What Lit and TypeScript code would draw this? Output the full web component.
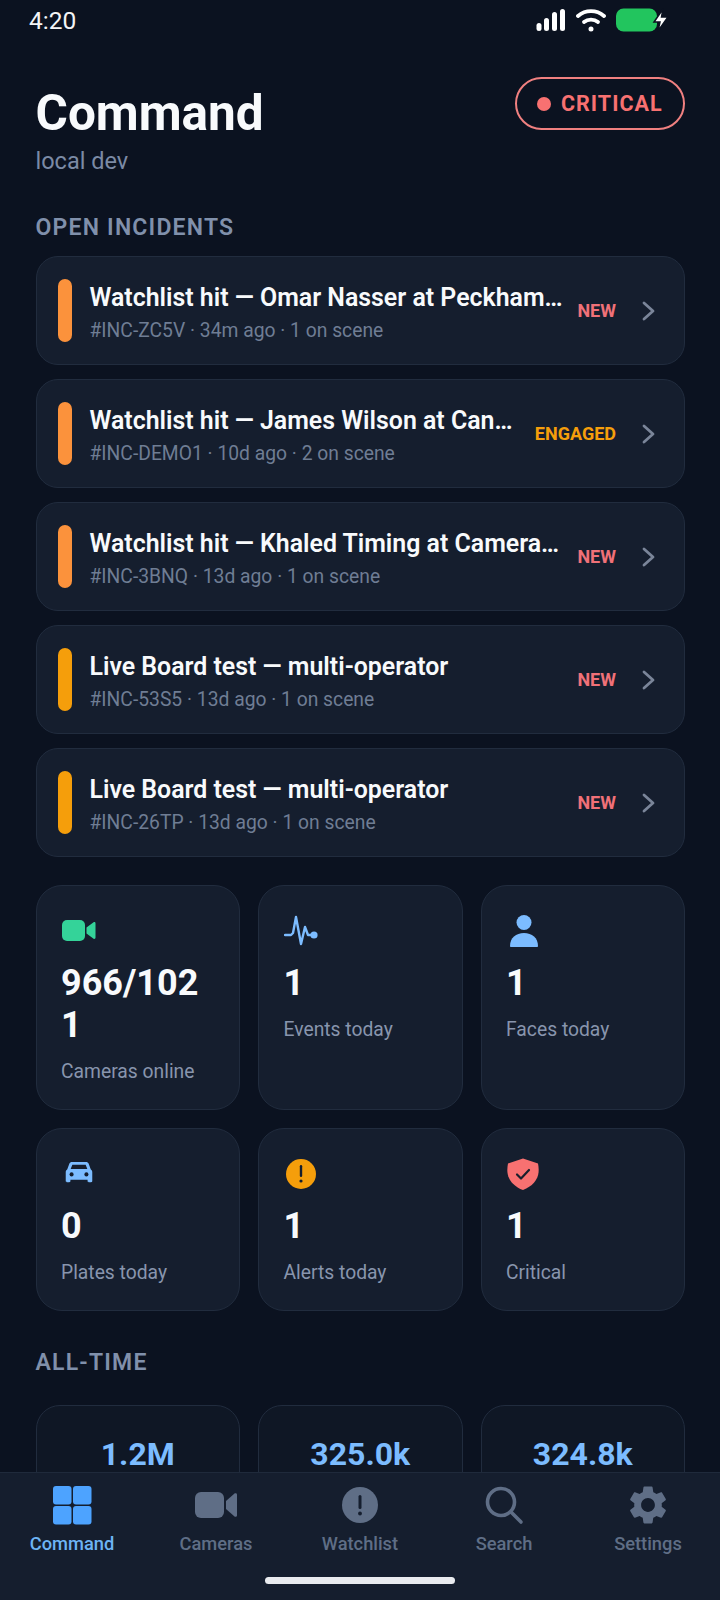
import { LitElement, html, css, svg } from 'lit';
import { customElement } from 'lit/decorators.js';

const incidents = [
  { title: 'Watchlist hit — Omar Nasser at Peckham…', sub: '#INC-ZC5V · 34m ago · 1 on scene', status: 'NEW', bar: '#fb923c' },
  { title: 'Watchlist hit — James Wilson at Can…', sub: '#INC-DEMO1 · 10d ago · 2 on scene', status: 'ENGAGED', bar: '#fb923c' },
  { title: 'Watchlist hit — Khaled Timing at Camera…', sub: '#INC-3BNQ · 13d ago · 1 on scene', status: 'NEW', bar: '#fb923c' },
  { title: 'Live Board test — multi-operator', sub: '#INC-53S5 · 13d ago · 1 on scene', status: 'NEW', bar: '#f59e0b' },
  { title: 'Live Board test — multi-operator', sub: '#INC-26TP · 13d ago · 1 on scene', status: 'NEW', bar: '#f59e0b' },
];

const icons = {
  video: svg`<svg width="36" height="32" viewBox="0 -3 36 32"><rect x="1" y="2" width="23" height="21" rx="5" fill="#34d399"/><path d="M25.500 9.500 32.600 4.300c.8-.6 1.900-.1 1.900.9v14.600c0 1-1.100 1.500-1.900.9L25.500 15.500z" fill="#34d399"/></svg>`,
  pulse: svg`<svg width="36" height="32" viewBox="0 0 36 32"><path d="M1 20h6l2-2L12 2l5 27 4-17 3 8h7" fill="none" stroke="#7cbcff" stroke-width="2.400" stroke-linejoin="round" stroke-linecap="round"/><circle cx="30" cy="20" r="3.600" fill="#7cbcff"/></svg>`,
  person: svg`<svg width="36" height="32" viewBox="0 0 36 32"><ellipse cx="18" cy="7.500" rx="7.500" ry="7.500" fill="#7cbcff"/><path d="M4 31c0-8 6-13 14-13s14 5 14 13c0 .5-.4 1-1 1H5c-.6 0-1-.5-1-1z" fill="#7cbcff"/></svg>`,
  car: svg`<svg width="36" height="32" viewBox="-5 -4 46 41"><path d="M9 1h18c1.600 0 2.800.8 3.300 2.200L33 10.500c1.300 1 2 2.300 2 3.800v11.200c0 1-.7 1.500-1.500 1.500h-3c-.8 0-1.500-.5-1.500-1.500V24H7v1.500C7 26.500 6.300 27 5.500 27h-3C1.700 27 1 26.500 1 25.500V14.300c0-1.500.7-2.800 2-3.800l2.700-7.300C6.200 1.800 7.400 1 9 1zm.5 3.500L7.300 10h21.400l-2.200-5.500z" fill="#7cbcff" fill-rule="evenodd"/><circle cx="8.500" cy="17" r="2.600" fill="#151e2e"/><circle cx="27.500" cy="17" r="2.600" fill="#151e2e"/></svg>`,
  alert: svg`<svg width="36" height="32" viewBox="-1 0 36 32"><circle cx="16" cy="16" r="15" fill="#f59e0b"/><rect x="14.800" y="7" width="2.400" height="12" rx="1.200" fill="#151e2e"/><circle cx="16" cy="23" r="1.600" fill="#151e2e"/></svg>`,
  shield: svg`<svg width="36" height="32" viewBox="0 0 36 32"><path d="M17 0.500 32 5.500c.6 3 .8 5.500.6 8.500-.6 8-6.600 14.500-15.600 18C8 28.500 2 22 1.400 14c-.2-3 0-5.500.6-8.500z" fill="#f87171"/><path d="M11 16.500l4 4 8-8.500" fill="none" stroke="#1a1f2c" stroke-width="2.200" stroke-linecap="round" stroke-linejoin="round"/></svg>`,
};

const stats = [
  { icon: icons.video, value: '966/1021', label: 'Cameras online' },
  { icon: icons.pulse, value: '1', label: 'Events today' },
  { icon: icons.person, value: '1', label: 'Faces today' },
  { icon: icons.car, value: '0', label: 'Plates today' },
  { icon: icons.alert, value: '1', label: 'Alerts today' },
  { icon: icons.shield, value: '1', label: 'Critical' },
];

const allTime = ['1.2M', '325.0k', '324.8k'];

const tabIcons = {
  command: svg`<svg width="40" height="40" viewBox="0 0 40 40" fill="currentColor"><rect x="1" y="1" width="18.500" height="18.500" rx="3"/><rect x="21" y="1" width="18.500" height="18.500" rx="3"/><rect x="1" y="21" width="18.500" height="18.500" rx="3"/><rect x="21" y="21" width="18.500" height="18.500" rx="3"/></svg>`,
  cameras: svg`<svg width="44" height="40" viewBox="0 0 44 40" fill="currentColor"><rect x="1" y="7" width="29" height="26" rx="6"/><path d="M32 16 40.500 8.500c.8-.7 2.500-.2 2.500 1v21c0 1.200-1.700 1.700-2.500 1L32 24z"/></svg>`,
  watchlist: svg`<svg width="40" height="40" viewBox="0 0 40 40"><circle cx="20" cy="20" r="18" fill="currentColor"/><rect x="18.500" y="10" width="3" height="14" rx="1.500" fill="#151e2e"/><circle cx="20" cy="28.500" r="1.900" fill="#151e2e"/></svg>`,
  search: svg`<svg width="40" height="40" viewBox="0 0 40 40" fill="none" stroke="currentColor" stroke-width="3.600" stroke-linecap="round"><circle cx="17" cy="17" r="13.500"/><path d="M27 27l10 10"/></svg>`,
  settings: svg`<svg width="46" height="46" viewBox="0 0 24 24" fill="currentColor"><path d="M19.140 12.940c.04-.3.06-.61.06-.94 0-.32-.02-.64-.07-.94l2.030-1.580c.18-.14.23-.41.12-.61l-1.920-3.320c-.12-.22-.37-.29-.59-.22l-2.390.96c-.5-.38-1.030-.7-1.620-.94l-.36-2.540c-.04-.24-.24-.41-.48-.41h-3.840c-.24 0-.43.17-.47.41l-.36 2.540c-.59.24-1.130.57-1.620.94l-2.390-.96c-.22-.08-.47 0-.59.22L2.740 8.870c-.12.21-.08.47.12.61l2.030 1.580c-.05.3-.09.63-.09.94s.02.64.07.94l-2.030 1.580c-.18.14-.23.41-.12.61l1.920 3.320c.12.22.37.29.59.22l2.390-.96c.5.38 1.030.7 1.620.94l.36 2.540c.05.24.24.41.48.41h3.840c.24 0 .44-.17.47-.41l.36-2.540c.59-.24 1.130-.56 1.620-.94l2.390.96c.22.08.47 0 .59-.22l1.920-3.320c.12-.22.07-.47-.12-.61l-2.010-1.580zM12 15.600c-1.980 0-3.600-1.620-3.600-3.600s1.620-3.600 3.600-3.600 3.600 1.620 3.600 3.600-1.620 3.600-3.600 3.600z"/></svg>`,
};

const tabs = [
  { key: 'command', label: 'Command', active: true },
  { key: 'cameras', label: 'Cameras' },
  { key: 'watchlist', label: 'Watchlist' },
  { key: 'search', label: 'Search' },
  { key: 'settings', label: 'Settings' },
] as const;

@customElement('app-root')
export class AppRoot extends LitElement {
  static styles = css`
    :host {
      display: block;
      width: 720px;
      height: 1600px;
      font-family: Roboto, 'Liberation Sans', sans-serif;
      color: #fff;
    }
    .app {
      display: flex;
      flex-direction: column;
      height: 1600px;
      background: #0b1220;
      overflow: hidden;
    }
    .scroll {
      flex: 1;
      min-height: 0;
      overflow: hidden;
    }
    .statusbar {
      display: flex;
      justify-content: space-between;
      align-items: center;
      height: 40px;
      padding: 0 50px 0 29px;
      font-size: 24.500px;
      color: #f3f4f6;
    }
    .status-icons {
      display: flex;
      align-items: center;
      gap: 10px;
    }
    .content {
      padding: 0 35px 0 35.500px;
    }
    .header {
      display: flex;
      justify-content: space-between;
      align-items: flex-start;
      padding-top: 37px;
    }
    h1 {
      margin: 8px 0 0;
      font-size: 49.500px;
      line-height: 56px;
      font-weight: 700;
      color: #f8fafc;
    }
    .env {
      margin-top: 6px;
      font-size: 23.500px;
      line-height: 28px;
      color: #7b8aa5;
    }
    .badge {
      display: flex;
      align-items: center;
      gap: 10px;
      box-sizing: border-box;
      height: 53px;
      width: 170px;
      padding-left: 20px;
      border: 2px solid #f08080;
      border-radius: 27px;
      color: #f87171;
      font-size: 21.500px;
      font-weight: 700;
      letter-spacing: 1px;
    }
    .dot {
      width: 14px;
      height: 14px;
      border-radius: 50%;
      background: #f87171;
    }
    .section {
      margin: 0;
      font-size: 23px;
      line-height: 26px;
      font-weight: 600;
      letter-spacing: 1.200px;
      color: #8090ab;
    }
    .open {
      margin-top: 40px;
    }
    .incidents {
      display: flex;
      flex-direction: column;
      gap: 14px;
      margin-top: 15px;
    }
    .incident {
      display: flex;
      align-items: center;
      box-sizing: border-box;
      height: 109px;
      padding: 0 28px 0 21px;
      background: #151e2e;
      border: 1.500px solid #212c3e;
      border-radius: 22px;
    }
    .bar {
      flex: none;
      width: 14px;
      height: 63px;
      border-radius: 7px;
      margin-right: 18px;
    }
    .body {
      flex: 1;
      min-width: 0;
      margin-right: 16px;
      padding-top: 5px;
    }
    .title {
      font-size: 24.900px;
      line-height: 31px;
      font-weight: 600;
      color: #f8fafc;
      white-space: nowrap;
    }
    .sub {
      margin-top: 5px;
      font-size: 19.300px;
      line-height: 26px;
      color: #6f7d94;
      white-space: nowrap;
    }
    .state {
      flex: none;
      font-size: 18px;
      font-weight: 700;
      margin-right: 26px;
    }
    .state.new { color: #f07178; }
    .state.engaged { color: #f59e0b; }
    .chev { flex: none; display: block; }
    .grid {
      display: grid;
      grid-template-columns: repeat(3, 1fr);
      gap: 18px;
      margin-top: 28px;
    }
    .stat {
      box-sizing: border-box;
      min-width: 0;
      padding: 29px 24px 24px 24.500px;
      background: #151e2e;
      border: 1.500px solid #212c3e;
      border-radius: 26px;
    }
    .stat-icon {
      display: block;
      height: 32px;
    }
    .stat-icon svg { display: block; }
    .value {
      margin-top: 15px;
      font-size: 36px;
      line-height: 42px;
      font-weight: 700;
      color: #f8fafc;
      word-break: break-all;
    }
    .label {
      margin-top: 13px;
      font-size: 19.300px;
      line-height: 26px;
      color: #8895ad;
    }
    .all {
      margin-top: 39px;
    }
    .totals {
      display: grid;
      grid-template-columns: repeat(3, 1fr);
      gap: 18px;
      margin-top: 29px;
    }
    .total {
      box-sizing: border-box;
      height: 140px;
      padding-top: 29px;
      text-align: center;
      font-size: 32px;
      line-height: 38px;
      font-weight: 700;
      color: #7cbcff;
      background: #0f1725;
      border: 1.500px solid #212c3e;
      border-radius: 24px;
    }
    .tabbar {
      flex: none;
      height: 128px;
      box-sizing: border-box;
      background: #151e2e;
      border-top: 1.500px solid #1f2a3b;
    }
    .tabs {
      display: grid;
      grid-template-columns: repeat(5, 144px);
      padding-top: 10px;
    }
    .tab {
      display: flex;
      flex-direction: column;
      align-items: center;
      color: #5f6e86;
    }
    .tab.active { color: #4da3ff; }
    .tab-icon {
      display: flex;
      align-items: center;
      justify-content: center;
      height: 44px;
    }
    .tab-label {
      font-size: 18.300px;
      line-height: 22px;
      margin-top: 6px;
      font-weight: 500;
      color: #5f6e86;
    }
    .tab.active .tab-label { color: #6db4f5; }
    .home {
      width: 190px;
      height: 7px;
      margin: 22px auto 0;
      border-radius: 4px;
      background: #e9ebef;
    }
  `;

  render() {
    return html`
      <div class="app">
        <div class="scroll">
          <div class="statusbar">
            <span>4:20</span>
            <div class="status-icons">
              <svg width="30" height="24" viewBox="0 0 30 24" fill="#fff">
                <rect x="0.500" y="15" width="5" height="8" rx="2.500" />
                <rect x="8" y="10" width="5" height="13" rx="2.500" />
                <rect x="16" y="4" width="5" height="19" rx="2.500" />
                <rect x="24" y="1" width="5" height="22" rx="2.500" />
              </svg>
              <svg width="30" height="24" viewBox="0 0 30 24" fill="none" stroke="#fff" stroke-width="3.800" stroke-linecap="round">
                <path d="M2 8c7.500-6.500 18.500-6.500 26 0" />
                <path d="M8 14c4-3.300 10-3.300 14 0" />
                <circle cx="15" cy="21" r="1.500" fill="#fff" stroke-width="2" />
              </svg>
              <svg width="54" height="24" viewBox="0 0 54 24">
                <rect x="0" y="0.500" width="41" height="23" rx="7.500" fill="#22c55e" />
                <path d="M47 1 38 14h6l-2 9 10-14h-6.500z" fill="#fff" stroke="#0b1220" stroke-width="1.500" />
              </svg>
            </div>
          </div>
          <div class="content">
            <div class="header">
              <div>
                <h1>Command</h1>
                <div class="env">local dev</div>
              </div>
              <div class="badge"><span class="dot"></span>CRITICAL</div>
            </div>
            <h2 class="section open">OPEN INCIDENTS</h2>
            <div class="incidents">
              ${incidents.map(
                (i) => html`
                  <div class="incident">
                    <span class="bar" style="background:${i.bar}"></span>
                    <div class="body">
                      <div class="title">${i.title}</div>
                      <div class="sub">${i.sub}</div>
                    </div>
                    <span class="state ${i.status.toLowerCase()}">${i.status}</span>
                    <svg class="chev" width="14" height="20" viewBox="0 0 14 20" fill="none" stroke="#7a8599" stroke-width="2.800" stroke-linecap="round" stroke-linejoin="round">
                      <path d="M2 2l9 8-9 8" />
                    </svg>
                  </div>
                `,
              )}
            </div>
            <div class="grid">
              ${stats.map(
                (s) => html`
                  <div class="stat">
                    <span class="stat-icon">${s.icon}</span>
                    <div class="value">${s.value}</div>
                    <div class="label">${s.label}</div>
                  </div>
                `,
              )}
            </div>
            <h2 class="section all">ALL-TIME</h2>
            <div class="totals">
              ${allTime.map((v) => html`<div class="total">${v}</div>`)}
            </div>
          </div>
        </div>
        <div class="tabbar">
          <div class="tabs">
            ${tabs.map(
              (t) => html`
                <div class="tab ${'active' in t ? 'active' : ''}">
                  <span class="tab-icon">${tabIcons[t.key]}</span>
                  <span class="tab-label">${t.label}</span>
                </div>
              `,
            )}
          </div>
          <div class="home"></div>
        </div>
      </div>
    `;
  }
}
